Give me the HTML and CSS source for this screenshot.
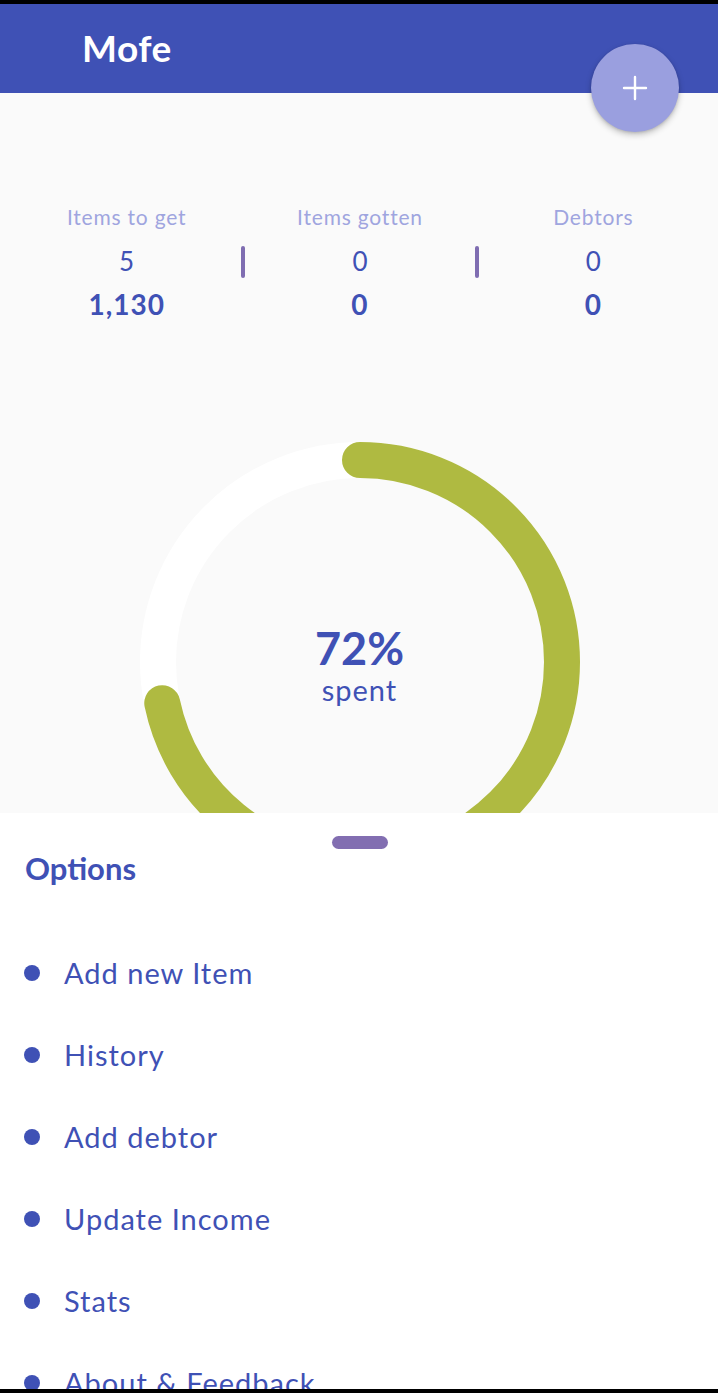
FILE: index.html
```html
<!DOCTYPE html>
<html>
<head>
<meta charset="utf-8">
<link rel="stylesheet" href="styles.css">
</head>
<body>
<div class="app">
  <header class="appbar">
    <h1 class="title">Mofe</h1>
    <button class="fab" aria-label="Add">
      <svg width="26" height="26" viewBox="0 0 26 26"><path d="M13 2v22M2 13h22" stroke="#fff" stroke-width="2.4" stroke-linecap="round"/></svg>
    </button>
  </header>
  <main class="main">
    <section class="stats">
      <div class="label c1">Items to get</div>
      <div class="label c3">Items gotten</div>
      <div class="label c5">Debtors</div>
      <div class="count c1">5</div>
      <div class="divider c2"></div>
      <div class="count c3">0</div>
      <div class="divider c4"></div>
      <div class="count c5">0</div>
      <div class="amount c1">1,130</div>
      <div class="amount c3">0</div>
      <div class="amount c5">0</div>
    </section>
    <section class="ring-wrap">
      <div class="ring">
        <svg class="ring-svg" width="440" height="440" viewBox="0 0 440 440">
          <circle cx="220" cy="220" r="202" fill="none" stroke="#ffffff" stroke-width="36"/>
          <circle cx="220" cy="220" r="202" fill="none" stroke="#afba41" stroke-width="36" stroke-linecap="round" stroke-dasharray="910 2000" transform="rotate(-90 220 220)"/>
        </svg>
        <div class="ring-text">
          <div class="pct">72%</div>
          <div class="spent">spent</div>
        </div>
      </div>
    </section>
  </main>
  <section class="sheet">
    <div class="handle"></div>
    <h2 class="sheet-title">Options</h2>
    <ul class="options">
      <li>Add new Item</li>
      <li>History</li>
      <li>Add debtor</li>
      <li>Update Income</li>
      <li>Stats</li>
      <li>About &amp; Feedback</li>
    </ul>
  </section>
</div>
</body>
</html>
```

FILE: styles.css
```css
* { box-sizing: border-box; }
html, body { margin: 0; padding: 0; }
body {
  width: 718px;
  height: 1393px;
  background: #000;
  overflow: hidden;
  font-family: Lato, "Noto Sans", sans-serif;
}
.app {
  margin-top: 4px;
  height: 1385px;
  display: flex;
  flex-direction: column;
  background: #fafafa;
  overflow: hidden;
  position: relative;
}
.appbar {
  position: relative;
  height: 89px;
  flex: none;
  background: #3f51b5;
  padding-left: 82px;
  display: flex;
  align-items: center;
  z-index: 2;
}
.title {
  margin: 0 0 3px;
  color: #fff;
  font-size: 37px;
  font-weight: 700;
  letter-spacing: 0.5px;
}
.fab {
  position: absolute;
  left: 591px;
  top: 40px;
  width: 88px;
  height: 88px;
  border-radius: 50%;
  border: none;
  background: #9a9fdf;
  box-shadow: 0 3px 6px rgba(0,0,0,0.22), 0 1px 3px rgba(0,0,0,0.12);
  display: flex;
  align-items: center;
  justify-content: center;
  padding: 0;
}
.main {
  height: 720px;
  flex: none;
  overflow: hidden;
  background: #fafafa;
  padding-top: 109px;
}
.stats {
  display: grid;
  grid-template-columns: 1fr 4px 1fr 4px 1fr;
  grid-template-rows: 28px 62px 24px;
  margin: 0 10px 0 12px;
  align-items: center;
  justify-items: center;
  color: #3f51b5;
}
.c1 { grid-column: 1; }
.c2 { grid-column: 2; }
.c3 { grid-column: 3; }
.c4 { grid-column: 4; }
.c5 { grid-column: 5; }
.label {
  grid-row: 1;
  color: #9fa5df;
  font-size: 21px;
  letter-spacing: 0.8px;
}
.count {
  grid-row: 2;
  font-size: 26px;
  line-height: 30px;
}
.divider {
  grid-row: 2;
  width: 4px;
  height: 32px;
  border-radius: 2px;
  background: #7f6db1;
  margin-top: 2px;
}
.amount {
  grid-row: 3;
  font-size: 28px;
  line-height: 30px;
  font-weight: 700;
  letter-spacing: 1px;
}
.ring-wrap {
  display: flex;
  justify-content: center;
  margin-top: 126px;
  padding-left: 1px;
}
.ring {
  display: grid;
  width: 440px;
  height: 440px;
}
.ring-svg, .ring-text { grid-area: 1 / 1; }
.ring-text {
  align-self: center;
  justify-self: center;
  text-align: center;
  color: #3f51b5;
  margin-top: 8px;
}
.pct {
  font-size: 45px;
  font-weight: 700;
  line-height: 44px;
}
.spent {
  margin-top: 4px;
  font-size: 29px;
  line-height: 32px;
  letter-spacing: 1px;
}
.sheet {
  flex: 1;
  background: #fff;
  padding: 23px 0 0 25px;
  position: relative;
}
.handle {
  width: 56px;
  height: 13px;
  border-radius: 7px;
  background: #826eb1;
  margin-left: 307px;
}
.sheet-title {
  margin: 0;
  color: #3f51b5;
  font-size: 31px;
  font-weight: 700;
  line-height: 38px;
}
.options {
  list-style: none;
  margin: 66px 0 0;
  padding: 0;
}
.options li {
  position: relative;
  height: 82px;
  line-height: 40px;
  padding-left: 39px;
  color: #3f51b5;
  font-size: 29px;
  letter-spacing: 1px;
  display: flex;
  align-items: flex-start;
}
.options li::before {
  content: "";
  position: absolute;
  left: -1px;
  top: 12px;
  width: 16px;
  height: 16px;
  border-radius: 50%;
  background: #3f51b5;
}
```
